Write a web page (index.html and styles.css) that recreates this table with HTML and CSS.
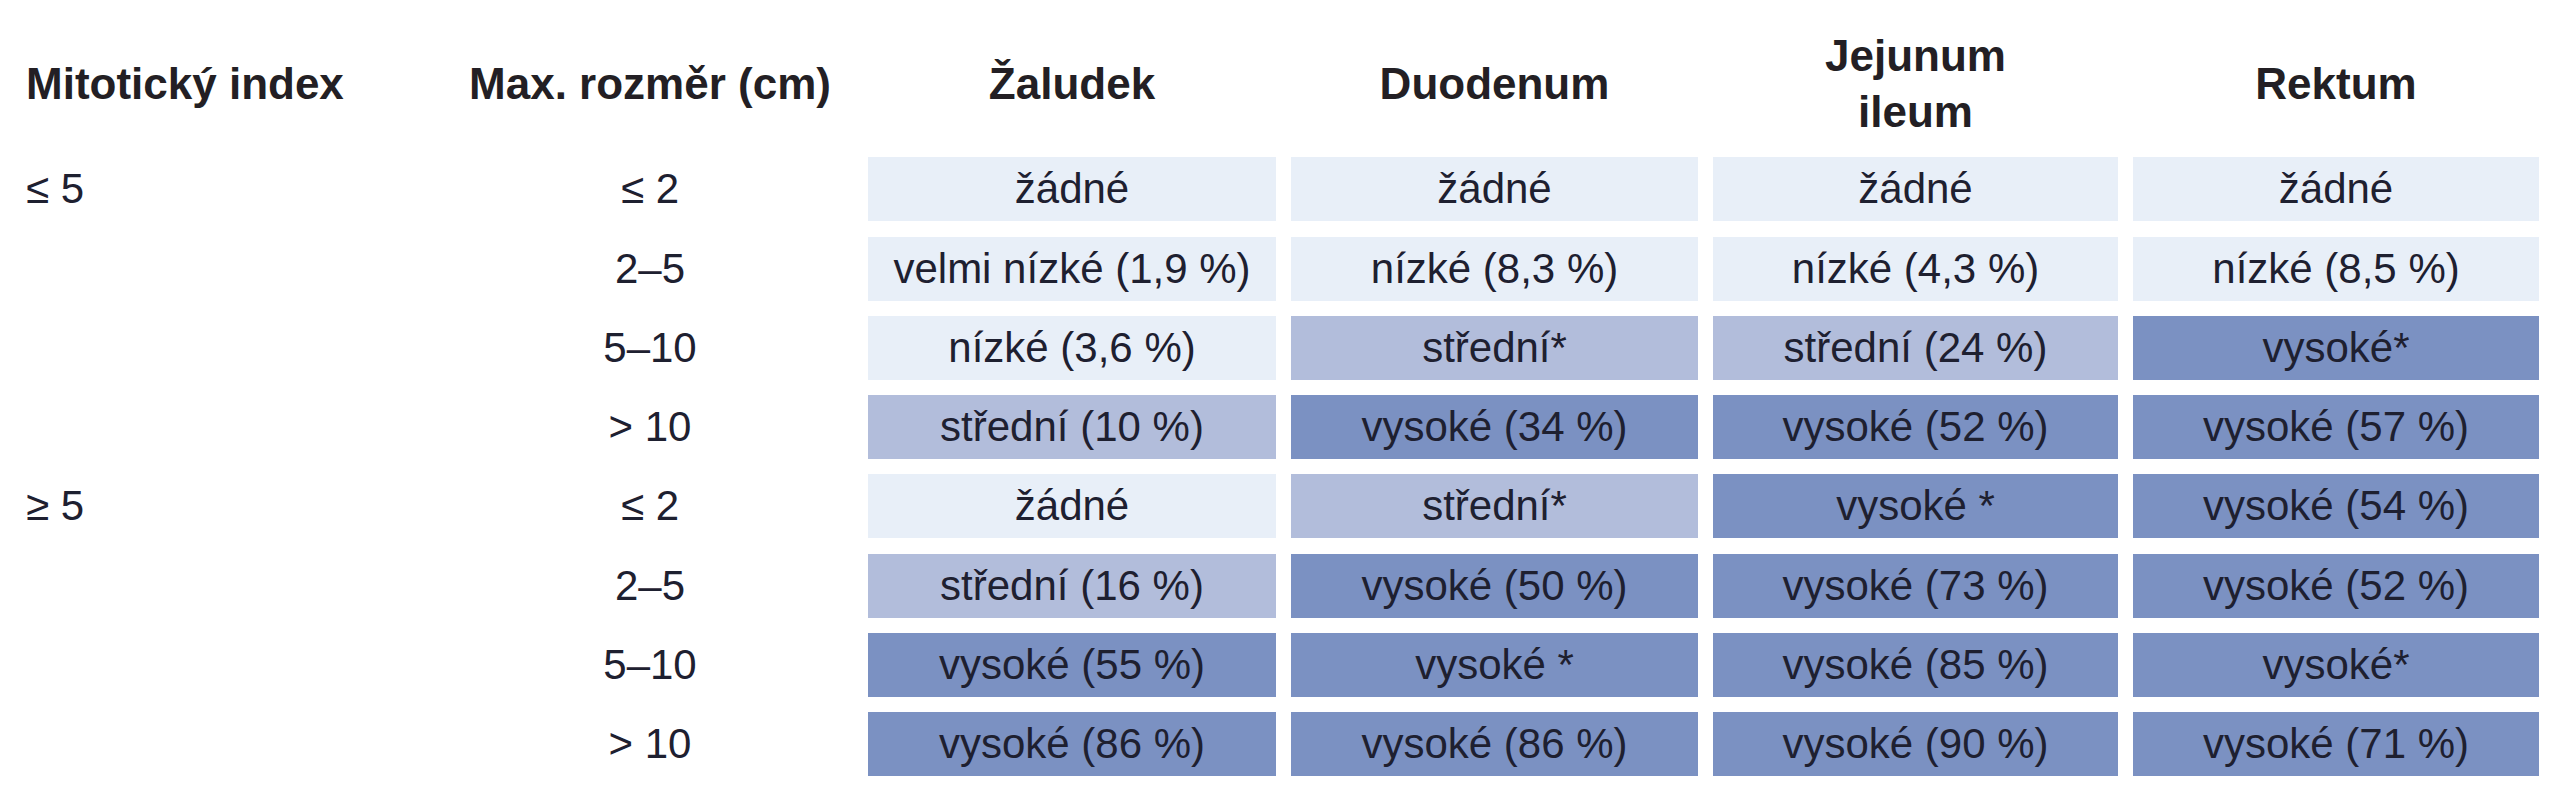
FILE: index.html
```html
<!DOCTYPE html>
<html lang="cs">
<head>
<meta charset="utf-8">
<title>Riziko progrese GIST</title>
<link rel="stylesheet" href="styles.css">
</head>
<body>
<div class="table">
  <div class="th th-left">Mitotický index</div>
  <div class="th">Max. rozměr (cm)</div>
  <div class="th">Žaludek</div>
  <div class="th">Duodenum</div>
  <div class="th">Jejunum<br>ileum</div>
  <div class="th">Rektum</div>

  <div class="td td-left">≤ 5</div>
  <div class="td">≤ 2</div>
  <div class="td low">žádné</div>
  <div class="td low">žádné</div>
  <div class="td low">žádné</div>
  <div class="td low">žádné</div>

  <div class="td td-left"></div>
  <div class="td">2–5</div>
  <div class="td low">velmi nízké (1,9 %)</div>
  <div class="td low">nízké (8,3 %)</div>
  <div class="td low">nízké (4,3 %)</div>
  <div class="td low">nízké (8,5 %)</div>

  <div class="td td-left"></div>
  <div class="td">5–10</div>
  <div class="td low">nízké (3,6 %)</div>
  <div class="td mid">střední*</div>
  <div class="td mid">střední (24 %)</div>
  <div class="td high">vysoké*</div>

  <div class="td td-left"></div>
  <div class="td">&gt; 10</div>
  <div class="td mid">střední (10 %)</div>
  <div class="td high">vysoké (34 %)</div>
  <div class="td high">vysoké (52 %)</div>
  <div class="td high">vysoké (57 %)</div>

  <div class="td td-left">≥ 5</div>
  <div class="td">≤ 2</div>
  <div class="td low">žádné</div>
  <div class="td mid">střední*</div>
  <div class="td high">vysoké *</div>
  <div class="td high">vysoké (54 %)</div>

  <div class="td td-left"></div>
  <div class="td">2–5</div>
  <div class="td mid">střední (16 %)</div>
  <div class="td high">vysoké (50 %)</div>
  <div class="td high">vysoké (73 %)</div>
  <div class="td high">vysoké (52 %)</div>

  <div class="td td-left"></div>
  <div class="td">5–10</div>
  <div class="td high">vysoké (55 %)</div>
  <div class="td high">vysoké *</div>
  <div class="td high">vysoké (85 %)</div>
  <div class="td high">vysoké*</div>

  <div class="td td-left"></div>
  <div class="td">&gt; 10</div>
  <div class="td high">vysoké (86 %)</div>
  <div class="td high">vysoké (86 %)</div>
  <div class="td high">vysoké (90 %)</div>
  <div class="td high">vysoké (71 %)</div>
</div>
</body>
</html>
```

FILE: styles.css
```css
html, body {
  margin: 0;
  padding: 0;
  background: #ffffff;
}

body {
  font-family: "Liberation Sans", Arial, sans-serif;
  color: #1e2030;
}

.table {
  display: grid;
  grid-template-columns: 406px 406px 408px 407px 405px 406px;
  grid-template-rows: 142px repeat(8, 64px);
  column-gap: 15px;
  row-gap: 15.3px;
  padding-left: 26px;
}

.th {
  font-weight: bold;
  font-size: 44px;
  line-height: 56px;
  color: #231f24;
  padding-top: 26px;
  display: flex;
  align-items: center;
  justify-content: center;
  text-align: center;
  box-sizing: border-box;
}

.th-left {
  justify-content: flex-start;
  text-align: left;
}

.td {
  font-size: 42px;
  line-height: 64px;
  height: 64px;
  text-align: center;
  white-space: nowrap;
}

.td-left {
  text-align: left;
}

.low {
  background: #e8eff8;
}

.mid {
  background: #b2bddb;
}

.high {
  background: #7b91c2;
}
```
